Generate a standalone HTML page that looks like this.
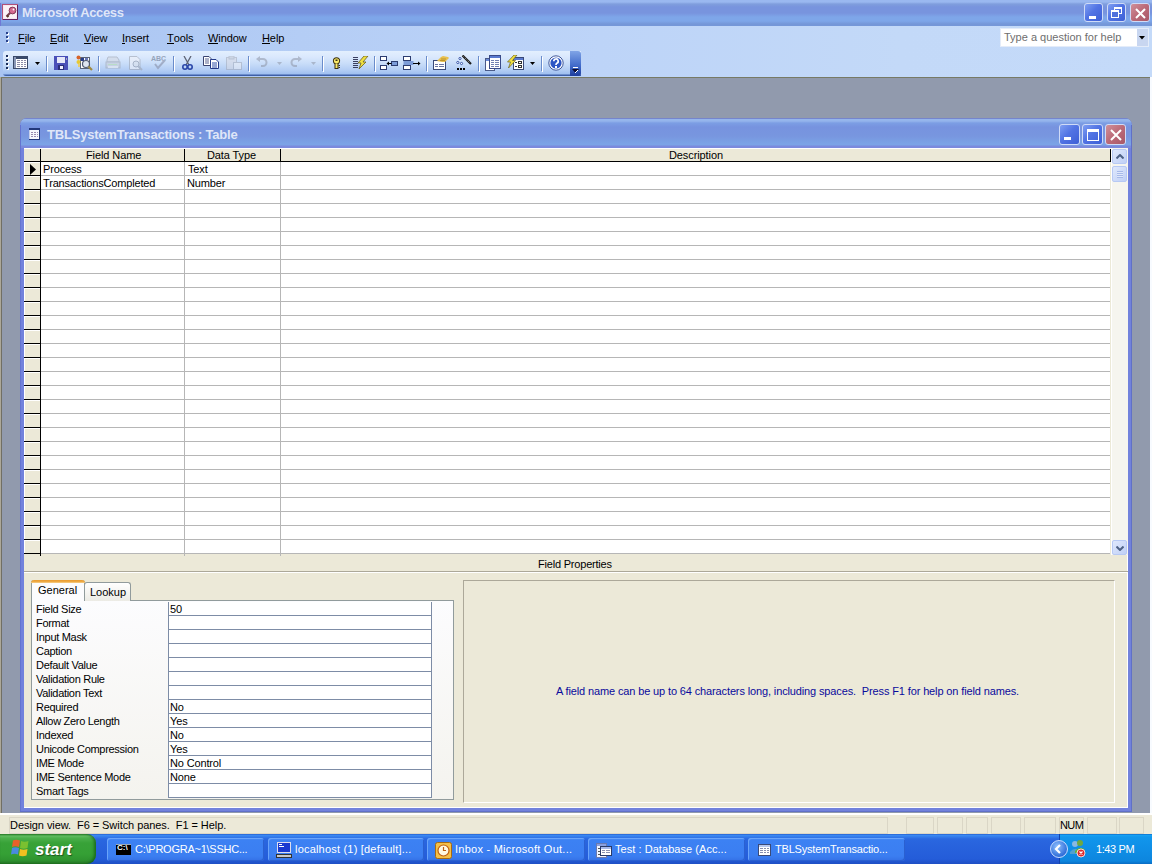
<!DOCTYPE html>
<html><head><meta charset="utf-8">
<style>
*{box-sizing:border-box;margin:0;padding:0}
html,body{width:1152px;height:864px;overflow:hidden;position:relative;background:#919aad;font-family:"Liberation Sans",sans-serif;font-size:11px;color:#000;line-height:1}
.a{position:absolute}
.t{position:absolute;white-space:pre;line-height:13px}
#title{left:0;top:0;width:1152px;height:26px;background:linear-gradient(#9ab8f0 0,#9ab8f0 2px,#809edd 4px,#7894de 7px,#7894de 13px,#7ea6e9 17px,#7ea6e9 21px,#7597d8 24px,#7597d8 26px)}
#dock{left:0;top:26px;width:1152px;height:51px;background:linear-gradient(to right,#a9c4f1 0,#b4cdf5 300px,#bdd4f8 600px,#c3d9f8 900px,#c4daf9 1152px)}
#mdiline{left:0;top:77px;width:1152px;height:1px;background:#777a66}
#mdil0{left:0;top:77px;width:1px;height:737px;background:#aca899}
#mdil1{left:1px;top:78px;width:1px;height:736px;background:#716f64}
#mdir{left:1150px;top:77px;width:2px;height:736px;background:#f8fbff}
.tb{font-weight:bold;font-size:13px;color:#dfe6f8;letter-spacing:-0.35px}
.cbtn{border:1px solid #cfdbf7;border-radius:3px}
/* status */
#status{left:0;top:813px;width:1152px;height:21px;background:#ece9d8;border-top:2px solid #fff}
.sp{position:absolute;top:2px;height:17px;border:1px solid #dad6c6}
/* taskbar */
#task{left:0;top:834px;width:1152px;height:30px;background:linear-gradient(#1d4fc0 0,#3d8df5 1px,#3783ef 2px,#2a67e0 5px,#2761dc 15px,#245cd9 25px,#1e4fc4 30px)}
.tbtn{position:absolute;top:4px;height:23px;border-radius:3px;background:linear-gradient(#4f93f8 0,#3c81f3 2px,#3b7ef1 18px,#3470e6 23px);box-shadow:inset 1px 1px 0 #6aa4fa,inset -1px -1px 0 #2a60d0;color:#fff;font-size:11px}
.tbtn .lbl{position:absolute;left:27px;top:5px;white-space:pre;line-height:13px}
.blk{background:#000}
.gl{background:#b6b6b6}
.sel{left:24px;width:16px;height:13px;background:#ece9d8}
.sbtn{border:1px solid #b7c9f4;border-radius:2px;background:linear-gradient(135deg,#dfe8fc,#c0d0f6)}
.mi{top:32px;letter-spacing:-0.1px}
.mi u{text-decoration:none;border-bottom:1px solid #000;display:inline-block;line-height:10px}
.pl{left:36px;letter-spacing:-0.3px}
.pv{left:170px;letter-spacing:-0.15px}
</style></head><body>
<!-- Title bar -->
<div id="title" class="a">
  <svg class="a" style="left:2px;top:4px" width="16" height="16" viewBox="0 0 16 16">
 <rect x="0.5" y="0.5" width="15" height="15" fill="#f6e8f0" stroke="#b0507a"/><path d="M15.5 1V15.5H1" stroke="#5e1e5e" fill="none"/>
 <rect x="2" y="2" width="12" height="12" fill="#fbf2f6"/>
 <circle cx="10.5" cy="6.5" r="3.4" fill="#d46a90" stroke="#7a3050" stroke-width="0.9"/><circle cx="11.5" cy="5.5" r="0.9" fill="#fff"/>
 <path d="M8 9L4.5 12.5" stroke="#7a4050" stroke-width="2.2"/><path d="M5 13L6.5 11.5" stroke="#5a3a2a" stroke-width="2"/>
</svg>
  <div class="t tb" style="left:22px;top:6px">Microsoft Access</div>
  <div class="a cbtn" style="left:1084px;top:3px;width:19px;height:19px;background:linear-gradient(135deg,#7f9ff2 0%,#5274e4 45%,#3d5fd6 100%)"><div class="a" style="left:4px;top:12px;width:7px;height:3px;background:#fff"></div></div>
  <div class="a cbtn" style="left:1107px;top:3px;width:19px;height:19px;background:linear-gradient(135deg,#7f9ff2 0%,#5274e4 45%,#3d5fd6 100%)">
    <div class="a" style="left:6px;top:3px;width:8px;height:7px;border:1px solid #fff;border-top-width:2px"></div>
    <div class="a" style="left:3px;top:6px;width:8px;height:8px;border:1px solid #fff;border-top-width:2px;background:#4f70dc"></div>
  </div>
  <div class="a cbtn" style="left:1130px;top:3px;width:20px;height:19px;background:linear-gradient(135deg,#d0909a 0%,#bb6a78 50%,#a85868 100%)">
    <svg class="a" style="left:3px;top:3px" width="13" height="13" viewBox="0 0 13 13"><path d="M2 2L11 11M11 2L2 11" stroke="#fff" stroke-width="2"/></svg>
  </div>
</div>
<div id="dock" class="a"></div><div class="a" style="left:0;top:3px;width:1px;height:23px;background:#6f78d6"></div>

<!-- menu bar -->
<div class="a" style="left:6px;top:32px;width:2px;height:2px;background:#27418a;box-shadow:1px 1px 0 #fff"></div>
<div class="a" style="left:6px;top:36px;width:2px;height:2px;background:#27418a;box-shadow:1px 1px 0 #fff"></div>
<div class="a" style="left:6px;top:40px;width:2px;height:2px;background:#27418a;box-shadow:1px 1px 0 #fff"></div>
<div class="t mi" style="left:18px"><u>F</u>ile</div>
<div class="t mi" style="left:50px"><u>E</u>dit</div>
<div class="t mi" style="left:84px"><u>V</u>iew</div>
<div class="t mi" style="left:122px"><u>I</u>nsert</div>
<div class="t mi" style="left:167px"><u>T</u>ools</div>
<div class="t mi" style="left:208px"><u>W</u>indow</div>
<div class="t mi" style="left:262px"><u>H</u>elp</div>
<!-- help box -->
<div class="a" style="left:1000px;top:28px;width:149px;height:19px;background:#fff;border:1px solid #e4ecf9"></div>
<div class="t" style="left:1004px;top:31px;color:#6e6e6e">Type a question for help</div>
<div class="a" style="left:1137px;top:29px;width:11px;height:17px;background:#c8d6f0"></div>
<svg class="a" style="left:1139px;top:36px" width="6" height="4" viewBox="0 0 6 4"><path d="M0 0H6L3 3.5Z" fill="#000"/></svg>
<!-- toolbar -->
<div class="a" style="left:3px;top:51px;width:578px;height:25px;border-radius:3px 0 0 3px;background:linear-gradient(#e3effe 0,#dae8fd 6px,#cadef9 12px,#b3cdf4 19px,#9fbff0 23px,#3d5fa8 24px,#3d5fa8 25px)"></div>
<div class="a" style="left:570px;top:51px;width:11px;height:25px;border-radius:0 3px 3px 0;background:linear-gradient(#80a4e6,#3f69c9 60%,#1e3d9c)"></div>
<div class="a" style="left:573px;top:67px;width:5px;height:1px;background:#fff"></div>
<svg class="a" style="left:572px;top:69px" width="7" height="5" viewBox="0 0 7 5"><path d="M0 0H7L3.5 4Z" fill="#0a0a30"/><path d="M3 4L6 1" stroke="#fff" stroke-width="1"/></svg>
<div class="a" style="left:6px;top:55px;width:2px;height:2px;background:#1b2d5a;box-shadow:1px 1px 0 #fff"></div>
<div class="a" style="left:6px;top:59px;width:2px;height:2px;background:#1b2d5a;box-shadow:1px 1px 0 #fff"></div>
<div class="a" style="left:6px;top:63px;width:2px;height:2px;background:#1b2d5a;box-shadow:1px 1px 0 #fff"></div>
<div class="a" style="left:6px;top:67px;width:2px;height:2px;background:#1b2d5a;box-shadow:1px 1px 0 #fff"></div>
<div class="a" style="left:46px;top:56px;width:1px;height:15px;background:#6a8ccb;box-shadow:1px 1px 0 #fff"></div>
<div class="a" style="left:98px;top:56px;width:1px;height:15px;background:#6a8ccb;box-shadow:1px 1px 0 #fff"></div>
<div class="a" style="left:173px;top:56px;width:1px;height:15px;background:#6a8ccb;box-shadow:1px 1px 0 #fff"></div>
<div class="a" style="left:248px;top:56px;width:1px;height:15px;background:#6a8ccb;box-shadow:1px 1px 0 #fff"></div>
<div class="a" style="left:322px;top:56px;width:1px;height:15px;background:#6a8ccb;box-shadow:1px 1px 0 #fff"></div>
<div class="a" style="left:374px;top:56px;width:1px;height:15px;background:#6a8ccb;box-shadow:1px 1px 0 #fff"></div>
<div class="a" style="left:426px;top:56px;width:1px;height:15px;background:#6a8ccb;box-shadow:1px 1px 0 #fff"></div>
<div class="a" style="left:478px;top:56px;width:1px;height:15px;background:#6a8ccb;box-shadow:1px 1px 0 #fff"></div>
<div class="a" style="left:541px;top:56px;width:1px;height:15px;background:#6a8ccb;box-shadow:1px 1px 0 #fff"></div>

<!-- toolbar icons -->
<svg class="a" style="left:13px;top:56px" width="15" height="13" viewBox="0 0 15 13">
 <rect x="0.5" y="0.5" width="14" height="12" fill="#fff" stroke="#3a4a6a"/>
 <rect x="1" y="1" width="13" height="2" fill="#3a4a6a"/><rect x="1" y="1" width="2" height="11" fill="#8a98b8"/>
 <g fill="#8c8ca8"><rect x="4" y="4" width="3" height="1"/><rect x="8" y="4" width="2" height="1"/><rect x="11" y="4" width="2" height="1"/>
 <rect x="4" y="6" width="3" height="1"/><rect x="8" y="6" width="2" height="1"/><rect x="11" y="6" width="2" height="1"/>
 <rect x="4" y="8" width="3" height="1"/><rect x="8" y="8" width="2" height="1"/><rect x="11" y="8" width="2" height="1"/>
 <rect x="4" y="10" width="3" height="1"/><rect x="8" y="10" width="2" height="1"/><rect x="11" y="10" width="2" height="1"/></g>
</svg>
<svg class="a" style="left:35px;top:62px" width="5" height="3" viewBox="0 0 5 3"><path d="M0 0H5L2.5 3Z" fill="#000"/></svg>
<svg class="a" style="left:54px;top:56px" width="14" height="14" viewBox="0 0 14 14">
 <rect x="0" y="0" width="14" height="14" fill="#4a50b8"/><rect x="3" y="1" width="8" height="6" fill="#e6e8f8"/><rect x="4" y="9" width="6" height="5" fill="#2a2e78"/><rect x="6" y="10" width="3" height="3" fill="#f0f0ff"/><rect x="12" y="2" width="1" height="2" fill="#aab"/>
</svg>
<svg class="a" style="left:76px;top:55px" width="17" height="16" viewBox="0 0 17 16">
 <rect x="4.5" y="2.5" width="9" height="11" fill="#fff" stroke="#5a6478"/>
 <rect x="5" y="3" width="3" height="3" fill="#2a3e8a"/><rect x="9" y="3" width="3" height="2" fill="#6a7ab8"/>
 <circle cx="2.5" cy="2.5" r="2" fill="#d8642a"/><circle cx="2.5" cy="7" r="2" fill="#e8c832"/><rect x="2" y="9" width="2" height="3" fill="#e8d070"/>
 <circle cx="10" cy="9" r="3.5" fill="#dfe6f0" stroke="#505a70" stroke-width="1.2"/><path d="M12.5 11.5L16 15" stroke="#a08a40" stroke-width="2.2"/>
</svg>
<!-- disabled print / preview / spell -->
<svg class="a" style="left:105px;top:56px" width="16" height="14" viewBox="0 0 16 14" opacity="0.55">
 <path d="M3 1H12L14 4V6H2V4Z" fill="#d4d8e0" stroke="#9aa0ac"/><rect x="1" y="6" width="14" height="6" fill="#c8ccd4" stroke="#9aa0ac"/><rect x="3" y="8" width="9" height="1" fill="#b0e0a0"/><rect x="3" y="10" width="10" height="2" fill="#eee"/>
</svg>
<svg class="a" style="left:128px;top:56px" width="16" height="15" viewBox="0 0 16 15" opacity="0.55">
 <path d="M1.5 0.5H9L12 3.5V13.5H1.5Z" fill="#f4f4f8" stroke="#9aa0ac"/><circle cx="8" cy="8" r="3" fill="#e0e4ea" stroke="#8a90a0"/><path d="M10 10L14 14" stroke="#9aa0ac" stroke-width="2"/>
</svg>
<svg class="a" style="left:151px;top:54px" width="16" height="16" viewBox="0 0 16 16" opacity="0.6">
 <text x="0" y="7" font-family="Liberation Sans" font-size="7" font-weight="bold" fill="#6a7890">ABC</text>
 <path d="M4 10L7 14L14 6" stroke="#8890a8" stroke-width="2" fill="none"/>
</svg>
<!-- cut copy paste -->
<svg class="a" style="left:182px;top:56px" width="11" height="14" viewBox="0 0 11 14">
 <path d="M2 0L7 9M9 0L4 9" stroke="#5e6474" stroke-width="1.3"/>
 <circle cx="3" cy="11" r="2.2" fill="none" stroke="#2a46a8" stroke-width="1.6"/><circle cx="8" cy="11" r="2.2" fill="none" stroke="#2a46a8" stroke-width="1.6"/>
</svg>
<svg class="a" style="left:203px;top:56px" width="16" height="13" viewBox="0 0 16 13">
 <path d="M0.5 0.5H6L8 2.5V9.5H0.5Z" fill="#fff" stroke="#3a4470"/><path d="M2 3H6M2 5H6M2 7H6" stroke="#5a6490"/>
 <path d="M7.5 3.5H13L15.5 6V12.5H7.5Z" fill="#fff" stroke="#243a88"/><path d="M9 7H14M9 9H14M9 11H14" stroke="#3050a8"/>
</svg>
<svg class="a" style="left:226px;top:56px" width="16" height="14" viewBox="0 0 16 14" opacity="0.5">
 <rect x="0.5" y="1.5" width="10" height="12" fill="#d8d8e0" stroke="#a0a4b0"/><rect x="3" y="0" width="5" height="3" fill="#c0c4cc" stroke="#a0a4b0"/>
 <rect x="7.5" y="6.5" width="8" height="7" fill="#f0f0f4" stroke="#a0a4b0"/>
</svg>
<!-- undo redo -->
<svg class="a" style="left:256px;top:56px" width="12" height="12" viewBox="0 0 12 12" opacity="0.5">
 <path d="M3 3H7A3.5 3.5 0 0 1 7 10H5" stroke="#8a90a0" stroke-width="2" fill="none"/><path d="M0 3L4 0V6Z" fill="#8a90a0"/>
</svg>
<svg class="a" style="left:277px;top:62px" width="5" height="3" viewBox="0 0 5 3" opacity="0.5"><path d="M0 0H5L2.5 3Z" fill="#8a90a0"/></svg>
<svg class="a" style="left:290px;top:56px" width="12" height="12" viewBox="0 0 12 12" opacity="0.5">
 <path d="M9 3H5A3.5 3.5 0 0 0 5 10H7" stroke="#8a90a0" stroke-width="2" fill="none"/><path d="M12 3L8 0V6Z" fill="#8a90a0"/>
</svg>
<svg class="a" style="left:311px;top:62px" width="5" height="3" viewBox="0 0 5 3" opacity="0.5"><path d="M0 0H5L2.5 3Z" fill="#8a90a0"/></svg>
<!-- key -->
<svg class="a" style="left:332px;top:57px" width="9" height="12" viewBox="0 0 9 12">
 <circle cx="4.5" cy="3.8" r="3.6" fill="#3a3010"/><circle cx="4.5" cy="3.8" r="2.6" fill="#f8e868"/><rect x="3.5" y="2.5" width="2" height="1.5" fill="#3a3010"/>
 <rect x="2.5" y="6.5" width="4" height="5.5" fill="#3a3010"/><rect x="3.5" y="6.5" width="2" height="4.5" fill="#f8e868"/><rect x="6.5" y="8" width="1.5" height="1" fill="#3a3010"/><rect x="6.5" y="10" width="1.5" height="1" fill="#3a3010"/>
</svg>
<!-- indexes -->
<svg class="a" style="left:352px;top:56px" width="17" height="13" viewBox="0 0 17 13">
 <g fill="#3a4060" shape-rendering="crispEdges"><rect x="1" y="1" width="5" height="1"/><rect x="1" y="3" width="5" height="1"/><rect x="1" y="5" width="5" height="1"/><rect x="1" y="7" width="5" height="1"/><rect x="1" y="9" width="5" height="1"/><rect x="1" y="11" width="5" height="1"/></g>
 <path d="M12 0L16 0L11 6H14L7 13L9 7H6Z" fill="#f0e040" stroke="#6a6020" stroke-width="0.8"/>
</svg>
<!-- insert rows -->
<svg class="a" style="left:380px;top:56px" width="18" height="15" viewBox="0 0 18 15">
 <rect x="0.5" y="0.5" width="6" height="4" fill="#fff" stroke="#2c3c70"/><rect x="0.5" y="9.5" width="6" height="4" fill="#fff" stroke="#2c3c70"/>
 <rect x="11.5" y="5.5" width="6" height="4" fill="#7c9cd8" stroke="#2c3c70"/><path d="M7 7.5H11.5" stroke="#000"/><path d="M6.5 7.5L9 5.5V9.5Z" fill="#000"/>
</svg>
<!-- delete rows -->
<svg class="a" style="left:403px;top:56px" width="18" height="15" viewBox="0 0 18 15">
 <rect x="0.5" y="0.5" width="7" height="4" fill="#fff" stroke="#2c3c70"/><rect x="0.5" y="9.5" width="7" height="4" fill="#fff" stroke="#2c3c70"/>
 <rect x="0.5" y="5" width="10" height="4" fill="#7c9cd8"/><path d="M10 7.5H16" stroke="#000"/><path d="M17.5 7.5L15 5.5V9.5Z" fill="#000"/>
</svg>
<!-- properties -->
<svg class="a" style="left:433px;top:56px" width="16" height="14" viewBox="0 0 16 14" shape-rendering="crispEdges">
 <rect x="0" y="4" width="13" height="10" fill="#3a4a78"/><rect x="1" y="5" width="11" height="8" fill="#fff"/>
 <g fill="#6a74a0"><rect x="2" y="8" width="3" height="1"/><rect x="6" y="8" width="5" height="1"/><rect x="2" y="10" width="3" height="1"/><rect x="6" y="10" width="5" height="1"/></g>
 <path d="M4 5L8 1L10 0L15 1L16 2L12 6L9 6Z" fill="#e8c050" shape-rendering="auto"/><path d="M8 3L13 3M7 4.5L12 4.5" stroke="#b08820" stroke-width="0.8" shape-rendering="auto"/>
</svg>
<!-- build wand -->
<svg class="a" style="left:456px;top:55px" width="16" height="16" viewBox="0 0 16 16">
 <path d="M6.5 0.5L15 9" stroke="#1a1a1a" stroke-width="2.2"/><path d="M7.5 1.5L14 8" stroke="#d8d8d8" stroke-width="0.7" stroke-dasharray="1 1.2"/>
 <circle cx="4" cy="3.5" r="1.1" fill="#fff" stroke="#2a48a0" stroke-width="0.9"/><circle cx="1.8" cy="7.5" r="1.1" fill="#fff" stroke="#2a48a0" stroke-width="0.9"/><circle cx="5.5" cy="8.5" r="1.1" fill="#fff" stroke="#2a48a0" stroke-width="0.9"/>
 <rect x="1" y="13" width="2" height="2" fill="#000"/><rect x="4" y="13" width="2" height="2" fill="#000"/><rect x="7" y="13" width="2" height="2" fill="#000"/>
</svg>
<!-- database window -->
<svg class="a" style="left:485px;top:55px" width="16" height="16" viewBox="0 0 16 16" shape-rendering="crispEdges">
 <rect x="0" y="3" width="10" height="13" fill="#4a5a88"/><rect x="1" y="4" width="8" height="11" fill="#fff"/><rect x="1" y="4" width="8" height="2" fill="#6a8ad8"/>
 <rect x="4" y="0" width="12" height="14" fill="#3a4a88"/><rect x="5" y="1" width="10" height="12" fill="#fff"/><rect x="5" y="1" width="10" height="2" fill="#5a7ad0"/>
 <g fill="#7080b0"><rect x="6" y="5" width="3" height="1"/><rect x="10" y="5" width="4" height="1"/><rect x="6" y="7" width="3" height="1"/><rect x="10" y="7" width="4" height="1"/><rect x="6" y="9" width="3" height="1"/><rect x="10" y="9" width="4" height="1"/><rect x="6" y="11" width="3" height="1"/><rect x="10" y="11" width="4" height="1"/></g>
</svg>
<!-- new object -->
<svg class="a" style="left:507px;top:55px" width="17" height="15" viewBox="0 0 17 15">
 <g shape-rendering="crispEdges"><rect x="6" y="2" width="11" height="13" fill="#3a4a78"/><rect x="7" y="3" width="9" height="11" fill="#fff"/><rect x="7" y="3" width="9" height="2" fill="#5a7ad0"/>
 <rect x="11" y="6" width="4" height="3" fill="#333"/><rect x="12" y="7" width="2" height="1" fill="#fff"/><rect x="11" y="10" width="4" height="3" fill="#333"/><rect x="12" y="11" width="2" height="1" fill="#fff"/>
 <rect x="8" y="7" width="2" height="1" fill="#333"/><rect x="8" y="11" width="2" height="1" fill="#333"/></g>
 <path d="M7 0L10 0L5.5 5.5H8.5L1.5 13L3.5 7H0.5Z" fill="#f0e040" stroke="#6a6020" stroke-width="0.7"/>
</svg>
<svg class="a" style="left:530px;top:62px" width="5" height="3" viewBox="0 0 5 3"><path d="M0 0H5L2.5 3Z" fill="#000"/></svg>
<!-- help -->
<svg class="a" style="left:548px;top:55px" width="16" height="16" viewBox="0 0 16 16">
 <circle cx="8" cy="8" r="7.2" fill="#fff" stroke="#40589a" stroke-width="1"/><circle cx="8" cy="8" r="5.6" fill="#2e56c4"/>
 <path d="M5.8 6.2A2.2 2.2 0 1 1 8.8 8.2C8 8.6 8 9 8 10" stroke="#fff" stroke-width="1.7" fill="none"/><rect x="7" y="11" width="2" height="2" fill="#fff"/>
</svg>
<div id="mdiline" class="a"></div>
<div id="mdil0" class="a"></div>
<div id="mdil1" class="a"></div>
<div id="mdir" class="a"></div>


<!-- Child window -->
<div id="child" class="a" style="left:20px;top:118px;width:1112px;height:694px;border-radius:7px 7px 0 0;background:#7282dc;overflow:hidden">
  <div class="a" style="left:0;top:0;width:1112px;height:30px;background:linear-gradient(#7585cc 0,#7585cc 1px,#95b5ec 1px,#95b5ec 3px,#7c9ee4 5px,#7793df 9px,#7896df 18px,#7ba3e6 26px,#7ba3e6 27px,#7b8add 28px,#7b8add 30px);border-radius:7px 7px 0 0"></div>
  <div class="a" style="left:0;top:7px;width:1px;height:687px;background:#6474d0"></div>
  <div class="a" style="right:0;top:7px;width:1px;height:687px;background:#6070c8"></div>
  <div class="a" style="left:0;bottom:0;width:1112px;height:1px;background:#6070c8"></div>
</div>
<svg class="a" style="left:29px;top:128px" width="11" height="12" viewBox="0 0 11 12">
 <rect x="0" y="0" width="11" height="12" fill="#23387a"/><rect x="0" y="2" width="10" height="9" fill="#f6f8fd"/><rect x="0" y="2" width="1" height="9" fill="#c8d0ea"/>
 <g fill="#9a8cb0"><rect x="2" y="4" width="2" height="1"/><rect x="5" y="4" width="2" height="1"/><rect x="8" y="4" width="1" height="1"/><rect x="2" y="6" width="2" height="1"/><rect x="5" y="6" width="2" height="1"/><rect x="8" y="6" width="1" height="1"/><rect x="2" y="8" width="2" height="1"/><rect x="5" y="8" width="2" height="1"/><rect x="8" y="8" width="1" height="1"/></g>
</svg>
<div class="t tb" style="left:47px;top:128px;letter-spacing:-0.2px">TBLSystemTransactions : Table</div>
<div class="a cbtn" style="left:1059px;top:124px;width:21px;height:21px;background:linear-gradient(135deg,#7f9ff2 0%,#5274e4 45%,#3d5fd6 100%)"><div class="a" style="left:4px;top:12px;width:7px;height:3px;background:#fff"></div></div>
<div class="a cbtn" style="left:1082px;top:124px;width:21px;height:21px;background:linear-gradient(135deg,#7f9ff2 0%,#5274e4 45%,#3d5fd6 100%)"><div class="a" style="left:4px;top:4px;width:12px;height:12px;border:1px solid #fff;border-top-width:3px"></div></div>
<div class="a cbtn" style="left:1105px;top:124px;width:21px;height:21px;background:linear-gradient(135deg,#d0909a 0%,#bb6a78 50%,#a85868 100%)"><svg class="a" style="left:4px;top:4px" width="12" height="12" viewBox="0 0 12 12"><path d="M1 1L11 11M11 1L1 11" stroke="#fff" stroke-width="2"/></svg></div>

<!-- client area -->
<div class="a" style="left:24px;top:148px;width:1104px;height:660px;background:#ece9d8;border-right:1px solid #fff;border-bottom:1px solid #fff"></div>
<!-- grid -->
<div class="a" style="left:24px;top:148px;width:1087px;height:1px;background:#fff"></div>
<div class="a" style="left:24px;top:149px;width:1087px;height:12px;background:#ece9d8"></div>
<div class="a blk" style="left:24px;top:161px;width:1087px;height:1px"></div>
<div class="a blk" style="left:40px;top:149px;width:1px;height:407px"></div>
<div class="a blk" style="left:184px;top:149px;width:1px;height:13px"></div>
<div class="a blk" style="left:280px;top:149px;width:1px;height:13px"></div>
<div class="a blk" style="left:1110px;top:149px;width:1px;height:13px"></div>
<div class="a" style="left:24px;top:162px;width:16px;height:392px;background:repeating-linear-gradient(#fff 0,#fff 1px,#ece9d8 1px,#ece9d8 13px,#000 13px,#000 14px)"></div>
<div class="a" style="left:24px;top:162px;width:1px;height:392px;background:repeating-linear-gradient(#fff 0,#fff 13px,#000 13px,#000 14px)"></div>
<div class="a" style="left:41px;top:162px;width:1069px;height:392px;background:repeating-linear-gradient(#fff 0,#fff 13px,#b6b6b6 13px,#b6b6b6 14px)"></div>
<div class="a gl" style="left:184px;top:162px;width:1px;height:394px"></div>
<div class="a gl" style="left:280px;top:162px;width:1px;height:394px"></div>
<div class="t" style="left:86px;top:149px;letter-spacing:-0.1px">Field Name</div>
<div class="t" style="left:207px;top:149px;letter-spacing:-0.1px">Data Type</div>
<div class="t" style="left:669px;top:149px;letter-spacing:-0.1px">Description</div>
<svg class="a" style="left:30px;top:164px" width="7" height="11" viewBox="0 0 7 11"><path d="M0 0L6 5.5L0 11Z" fill="#000"/></svg>
<div class="t" style="left:43px;top:163px;letter-spacing:-0.15px">Process</div>
<div class="t" style="left:188px;top:163px;letter-spacing:-0.15px">Text</div>
<div class="t" style="left:43px;top:177px;letter-spacing:-0.17px">TransactionsCompleted</div>
<div class="t" style="left:187px;top:177px;letter-spacing:-0.15px">Number</div>
<!-- scrollbar -->
<div class="a" style="left:1111px;top:148px;width:17px;height:407px;background:#f6f5ef;border-left:1px solid #fff"></div>
<div class="a sbtn" style="left:1112px;top:149px;width:15px;height:15px"><svg class="a" style="left:3px;top:4px" width="8" height="5" viewBox="0 0 8 5"><path d="M0.5 4.5L4 1L7.5 4.5" stroke="#4d6185" stroke-width="2" fill="none"/></svg></div>
<div class="a sbtn" style="left:1112px;top:166px;width:15px;height:16px"><div class="a" style="left:4px;top:4px;width:6px;height:7px;background:repeating-linear-gradient(#a6b9e9 0,#a6b9e9 1px,#e0e8fb 1px,#e0e8fb 2px)"></div></div>
<div class="a sbtn" style="left:1112px;top:540px;width:15px;height:15px"><svg class="a" style="left:3px;top:5px" width="8" height="5" viewBox="0 0 8 5"><path d="M0.5 0.5L4 4L7.5 0.5" stroke="#4d6185" stroke-width="2" fill="none"/></svg></div>


<!-- lower pane -->
<div class="t" style="left:538px;top:558px;letter-spacing:-0.2px">Field Properties</div>
<div class="a" style="left:24px;top:571px;width:1104px;height:1px;background:#aca899"></div>
<div class="a" style="left:24px;top:572px;width:1104px;height:1px;background:#fff"></div>
<!-- tab panel -->
<div class="a" style="left:31px;top:600px;width:423px;height:200px;border:1px solid #919b9c;background:linear-gradient(#fcfcfe,#f4f3ee)"></div>
<div class="a" style="left:84px;top:582px;width:47px;height:19px;border:1px solid #919b9c;border-bottom:none;border-radius:3px 3px 0 0;background:linear-gradient(#fff,#ecebe5)"></div>
<div class="a" style="left:31px;top:580px;width:54px;height:21px;border:1px solid #919b9c;border-bottom:none;border-top:none;border-radius:3px 3px 0 0;background:#fcfcfe"></div>
<div class="a" style="left:31px;top:580px;width:54px;height:3px;background:linear-gradient(#e89a30 0,#f0ae48 2px,#f8d8a0 3px);border-radius:3px 3px 0 0"></div>
<div class="t" style="left:38px;top:584px">General</div>
<div class="t" style="left:90px;top:586px">Lookup</div>
<!-- value column -->
<div class="a" style="left:168px;top:602px;width:264px;height:196px;background:repeating-linear-gradient(#fff 0,#fff 13px,#7d8ca6 13px,#7d8ca6 14px);border-left:1px solid #7d8ca6;border-right:1px solid #7d8ca6"></div>
<div class="t pl" style="top:603px">Field Size</div>
<div class="t pv" style="top:603px">50</div>
<div class="t pl" style="top:617px">Format</div>
<div class="t pl" style="top:631px">Input Mask</div>
<div class="t pl" style="top:645px">Caption</div>
<div class="t pl" style="top:659px">Default Value</div>
<div class="t pl" style="top:673px">Validation Rule</div>
<div class="t pl" style="top:687px">Validation Text</div>
<div class="t pl" style="top:701px">Required</div>
<div class="t pv" style="top:701px">No</div>
<div class="t pl" style="top:715px">Allow Zero Length</div>
<div class="t pv" style="top:715px">Yes</div>
<div class="t pl" style="top:729px">Indexed</div>
<div class="t pv" style="top:729px">No</div>
<div class="t pl" style="top:743px">Unicode Compression</div>
<div class="t pv" style="top:743px">Yes</div>
<div class="t pl" style="top:757px">IME Mode</div>
<div class="t pv" style="top:757px">No Control</div>
<div class="t pl" style="top:771px">IME Sentence Mode</div>
<div class="t pv" style="top:771px">None</div>
<div class="t pl" style="top:785px">Smart Tags</div>
<!-- description pane -->

<div class="a" style="left:463px;top:580px;width:652px;height:223px;border:1px solid #aca899;border-right-color:#fff;border-bottom-color:#fff"></div>
<div class="t" style="left:556px;top:685px;color:#0a0a9c;letter-spacing:-0.13px">A field name can be up to 64 characters long, including spaces.  Press F1 for help on field names.</div>

<!-- Status bar -->
<div id="status" class="a">
  <div class="t" style="left:10px;top:4px;letter-spacing:-0.06px">Design view.  F6 = Switch panes.  F1 = Help.</div><div class="sp" style="left:9px;width:879px"></div><div class="sp" style="left:906px;width:28px"></div><div class="sp" style="left:937px;width:26px"></div><div class="sp" style="left:966px;width:22px"></div><div class="sp" style="left:991px;width:30px"></div><div class="sp" style="left:1024px;width:32px"></div><div class="sp" style="left:1059px;width:25px"></div><div class="sp" style="left:1087px;width:30px"></div><div class="sp" style="left:1119px;width:25px"></div><div class="t" style="left:1060px;top:4px;letter-spacing:-0.6px">NUM</div>
</div>

<!-- Taskbar -->
<div id="task" class="a">
  <div class="a" style="left:0;top:0;width:96px;height:30px;border-radius:0 9px 9px 0;background:linear-gradient(#2f8a2f 0,#63c063 2px,#4cb04c 4px,#38a238 9px,#35a035 20px,#2f9430 26px,#277a27 30px);box-shadow:inset -2px 0 3px rgba(0,60,0,.5)"></div>
  <svg class="a" style="left:10px;top:5px" width="20" height="18" viewBox="0 0 20 18">
    <path d="M3 1.5Q6 0 10 1.5L9 8Q5 6.5 2 8Z" fill="#e8602a"/>
    <path d="M11 2Q14.5 3.5 18.5 2L17.5 9Q13.5 10.5 10 9Z" fill="#7ac030"/>
    <path d="M2 9Q5 7.5 9 9L8 15.5Q4.5 14 1 15.5Z" fill="#4a8ae0"/>
    <path d="M10 10Q13.5 11.5 17.5 10L16.5 16.5Q12.5 18 9 16.5Z" fill="#f0c020"/>
  </svg>
  <div class="t" style="left:35px;top:6px;font-size:17px;font-weight:bold;font-style:italic;color:#fff;line-height:20px;text-shadow:1px 1px 1px rgba(0,0,0,.45)">start</div>
  <div class="tbtn" style="left:107px;width:157px">
    <div class="a" style="left:9px;top:6px;width:15px;height:11px;background:#000;border-top:1px solid #9ab"></div>
    <div class="t" style="left:10px;top:5px;font-size:8px;font-weight:bold;color:#fff;line-height:10px">C:\</div>
    <div class="lbl" style="left:28px;letter-spacing:-0.25px">C:\PROGRA~1\SSHC...</div>
  </div>
  <div class="tbtn" style="left:268px;width:156px">
    <svg class="a" style="left:8px;top:4px" width="16" height="16" viewBox="0 0 16 16"><rect x="1.5" y="0.5" width="13" height="10" fill="#1a3ad0" stroke="#dde"/><rect x="3" y="2" width="3" height="1" fill="#fff"/><rect x="3" y="4" width="5" height="1" fill="#fff"/><rect x="0.5" y="12.5" width="15" height="3" fill="#c8c8c8" stroke="#333"/></svg>
    <div class="lbl" style="left:27px;letter-spacing:0.2px">localhost (1) [default]...</div>
  </div>
  <div class="tbtn" style="left:427px;width:158px">
    <svg class="a" style="left:8px;top:4px" width="17" height="17" viewBox="0 0 17 17"><rect x="0.5" y="0.5" width="16" height="16" rx="2" fill="#f4c048" stroke="#a86a10"/><circle cx="8.5" cy="8.5" r="5.5" fill="#fff8e0" stroke="#c06010" stroke-width="1.2"/><path d="M8.5 5V8.5H11" stroke="#c06010" stroke-width="1.2" fill="none"/></svg>
    <div class="lbl" style="left:28px;letter-spacing:0.25px">Inbox - Microsoft Out...</div>
  </div>
  <div class="tbtn" style="left:588px;width:157px">
    <svg class="a" style="left:8px;top:5px" width="16" height="16" viewBox="0 0 16 16" shape-rendering="crispEdges">
 <rect x="0" y="0" width="11" height="15" fill="#6a7ab0"/><rect x="1" y="1" width="9" height="13" fill="#f0f4ff"/><rect x="1" y="1" width="9" height="2" fill="#8aa0e0"/><g fill="#555"><rect x="2" y="5" width="2" height="1"/><rect x="2" y="8" width="2" height="1"/><rect x="2" y="11" width="2" height="1"/></g>
 <rect x="4" y="3" width="12" height="10" fill="#2a3a68"/><rect x="5" y="4" width="10" height="8" fill="#fff"/><rect x="5" y="4" width="10" height="2" fill="#a8b8e8"/>
 <g fill="#8890b0"><rect x="6" y="7" width="3" height="1"/><rect x="10" y="7" width="4" height="1"/><rect x="6" y="9" width="3" height="1"/><rect x="10" y="9" width="4" height="1"/></g>
</svg>
    <div class="lbl" style="left:27px;letter-spacing:0.05px">Test : Database (Acc...</div>
  </div>
  <div class="tbtn" style="left:748px;width:157px">
    <svg class="a" style="left:10px;top:6px" width="13" height="12" viewBox="0 0 13 12" shape-rendering="crispEdges">
 <rect x="0" y="0" width="13" height="12" fill="#3a4a78"/><rect x="1" y="1" width="11" height="10" fill="#fff"/><rect x="1" y="1" width="11" height="2" fill="#b8c8ee"/>
 <g fill="#8890b0"><rect x="2" y="4" width="3" height="1"/><rect x="6" y="4" width="2" height="1"/><rect x="9" y="4" width="2" height="1"/><rect x="2" y="6" width="3" height="1"/><rect x="6" y="6" width="2" height="1"/><rect x="9" y="6" width="2" height="1"/><rect x="2" y="8" width="3" height="1"/><rect x="6" y="8" width="2" height="1"/><rect x="9" y="8" width="2" height="1"/></g>
</svg>
    <div class="lbl" style="left:27px;letter-spacing:-0.2px">TBLSystemTransactio...</div>
  </div>
  <!-- tray -->
  <div class="a" style="left:1059px;top:0;width:93px;height:30px;background:linear-gradient(#0c59b9 0,#16a4f6 1px,#1196ec 3px,#0f8ee6 15px,#0d86de 27px,#0a6cc4 30px);border-left:1px solid #1042af"></div>
  <div class="a" style="left:1050px;top:6px;width:18px;height:18px;border-radius:50%;background:radial-gradient(circle at 40% 35%,#90c0ff,#2f6ed8 70%);border:1px solid #c8dcff"></div>
  <svg class="a" style="left:1054px;top:10px" width="9" height="10" viewBox="0 0 9 10"><path d="M6 1L2 5L6 9" stroke="#fff" stroke-width="2.2" fill="none"/></svg>
  <svg class="a" style="left:1069px;top:5px" width="18" height="20" viewBox="0 0 18 20"><circle cx="6" cy="5" r="3" fill="#8ab8e0"/><circle cx="11" cy="4" r="3" fill="#70a840"/><path d="M1 13Q6 7 11 12V15H1Z" fill="#50a0d0"/><path d="M6 12Q11 6 16 11V14H6Z" fill="#60b040"/><circle cx="12" cy="14" r="4" fill="#e02a2a" stroke="#fff" stroke-width="0.8"/><path d="M10.5 12.5L13.5 15.5M13.5 12.5L10.5 15.5" stroke="#fff" stroke-width="1.2"/></svg>
  <div class="t" style="left:1096px;top:9px;color:#fff;letter-spacing:-0.4px">1:43 PM</div>
</div>
</body></html>
